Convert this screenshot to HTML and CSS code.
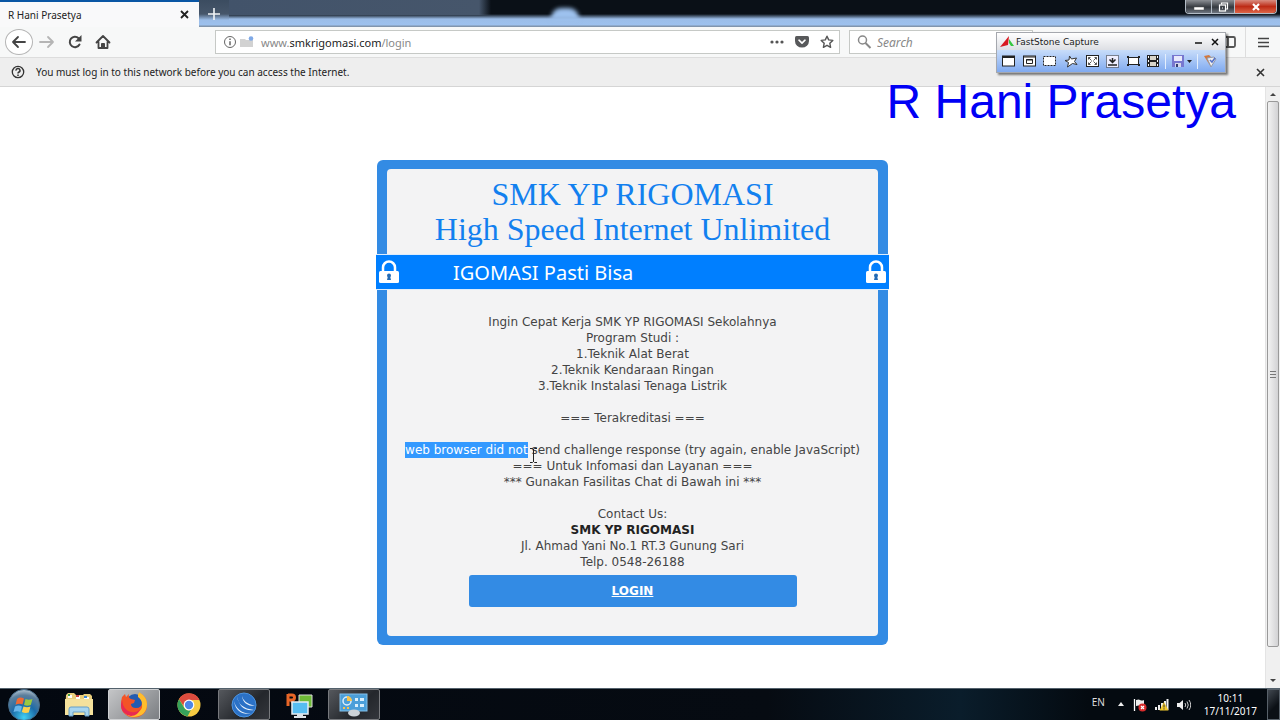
FILE: index.html
```html
<!DOCTYPE html>
<html lang="id">

<head>
    <meta charset="UTF-8">
    <meta name="viewport" content="width=device-width, initial-scale=1.0">
    <title>R Hani Prasetya</title>
    <link rel="stylesheet" href="styles.css">
</head>

<body>
    <!-- Tab strip -->
    <header class="titlebar">
        <div class="tab">
            <span>R Hani Prasetya</span>
            <button class="icon-btn" aria-label="Close tab">
                <svg width="9" height="9" viewBox="0 0 9 9"><path d="M1 1l7 7M8 1l-7 7" stroke="#222" stroke-width="1.8"/></svg>
            </button>
        </div>
        <button class="icon-btn new-tab" aria-label="New tab">
            <svg width="14" height="14" viewBox="0 0 14 14"><path d="M7 1v12M1 7h12" stroke="#f2f5f8" stroke-width="1.6"/></svg>
        </button>
        <div class="glass"><i class="glow"></i></div>
        <div class="window-buttons">
            <button class="win-btn" aria-label="Minimize">
                <svg width="12" height="10" viewBox="0 0 12 10"><path d="M1 5h10v3H1z" fill="#fff" stroke="#555" stroke-width=".5"/></svg>
            </button>
            <button class="win-btn restore" aria-label="Restore">
                <svg width="11" height="10" viewBox="0 0 11 10" fill="none" stroke="#fff" stroke-width="1.2"><path d="M3.5 2.5V1h6v6H8"/><rect x="1.5" y="3" width="6" height="6"/><path d="M4 6h1"/></svg>
            </button>
            <button class="win-btn close" aria-label="Close">
                <svg width="10" height="8" viewBox="0 0 10 8"><path d="M2 1l6 6M8 1L2 7" stroke="#fff" stroke-width="2.2"/></svg>
            </button>
        </div>
    </header>

    <!-- Navigation toolbar -->
    <nav class="toolbar">
        <div class="nav-buttons">
            <button class="icon-btn back" aria-label="Back">
                <svg width="16" height="14" viewBox="0 0 16 14" fill="none" stroke="#444" stroke-width="1.8" stroke-linecap="round" stroke-linejoin="round"><path d="M14 7H2M7 2L2 7l5 5"/></svg>
            </button>
            <button class="icon-btn" aria-label="Forward">
                <svg width="16" height="14" viewBox="0 0 16 14" fill="none" stroke="#b5b5b5" stroke-width="1.8" stroke-linecap="round" stroke-linejoin="round"><path d="M1 7h13M9 2l5 5-5 5"/></svg>
            </button>
            <button class="icon-btn" aria-label="Reload">
                <svg width="16" height="16" viewBox="0 0 16 16"><path d="M12.5 10.5A5.2 5.2 0 1 1 11.6 4.2" fill="none" stroke="#444" stroke-width="2" stroke-linecap="round"/><path d="M14.5 1v6.5H8z" fill="#444"/></svg>
            </button>
            <button class="icon-btn" aria-label="Home">
                <svg width="16" height="16" viewBox="0 0 16 16" fill="none" stroke="#444" stroke-width="1.8" stroke-linecap="round" stroke-linejoin="round"><path d="M1.5 8.5L8 2l6.5 6.5M3.5 8v6h9V8"/><path d="M6.5 14V9.5h3V14" fill="#444" stroke-width="1"/></svg>
            </button>
        </div>
        <div class="urlbar">
            <svg width="14" height="14" viewBox="0 0 14 14" fill="none" stroke="#666"><circle cx="7" cy="7" r="5.5"/><path d="M7 6.2v4M7 3.6v1.4" stroke-width="1.5"/></svg>
            <svg width="14" height="14" viewBox="0 0 14 14"><path d="M0 4h5l1 1h7v7H0z" fill="#d2d2d2"/><circle cx="11" cy="3.5" r="2.3" fill="#7fa9e6"/></svg>
            <a class="url" href="#">www.<b>smkrigomasi.com</b>/login</a>
            <button class="icon-btn" aria-label="Page actions">
                <svg width="14" height="4" viewBox="0 0 14 4" fill="#555"><circle cx="2" cy="2" r="1.6"/><circle cx="7" cy="2" r="1.6"/><circle cx="12" cy="2" r="1.6"/></svg>
            </button>
            <button class="icon-btn" aria-label="Save to Pocket">
                <svg width="14" height="12" viewBox="0 0 14 12"><path d="M1.5 0h11Q14 0 14 1.5V5a7 6.6 0 0 1-14 0V1.5Q0 0 1.5 0z" fill="#58595b"/><path d="M4 4.2l3 2.9 3-2.9" fill="none" stroke="#fff" stroke-width="1.6" stroke-linecap="round" stroke-linejoin="round"/></svg>
            </button>
            <button class="icon-btn" aria-label="Bookmark">
                <svg width="14" height="14" viewBox="0 0 14 14"><path d="M7 1.2l1.7 3.7 4.1.5-3 2.8.8 4.1L7 10.3l-3.6 2 .8-4.1-3-2.8 4.1-.5z" fill="none" stroke="#555" stroke-width="1.4" stroke-linejoin="round"/></svg>
            </button>
        </div>
        <div class="searchbar">
            <svg width="15" height="14" viewBox="0 0 15 14" fill="none" stroke="#888" stroke-width="1.5"><circle cx="5.5" cy="5" r="4"/><path d="M8.5 8l5 5" stroke-width="2"/></svg>
            <input type="text" placeholder="Search" aria-label="Search">
        </div>
        <div class="menu-area">
            <button class="icon-btn" aria-label="Sidebars">
                <svg width="16" height="12" viewBox="0 0 16 12" fill="none" stroke="#555" stroke-width="1.8"><rect x="1" y="1" width="14" height="10" rx="1.5"/><path d="M8 1v10"/></svg>
            </button>
            <button class="icon-btn menu" aria-label="Menu">
                <svg width="11" height="11" viewBox="0 0 11 11" stroke="#444" stroke-width="1.5"><path d="M0 1.5h11M0 5.5h11M0 9.5h11"/></svg>
            </button>
        </div>
    </nav>

    <div class="notice">
        <svg width="14" height="14" viewBox="0 0 14 14" fill="none" stroke="#333"><circle cx="7" cy="7" r="5.7" stroke-width="1.3"/><path d="M5 5.6a2 1.9 0 1 1 2.7 1.6Q7 7.5 7 8.5M7 9.6v1.5" stroke-width="1.5"/></svg>
        <span>You must log in to this network before you can access the Internet.</span>
        <button class="icon-btn" aria-label="Dismiss">
            <svg width="9" height="9" viewBox="0 0 9 9"><path d="M1 1l7 7M8 1l-7 7" stroke="#333" stroke-width="1.6"/></svg>
        </button>
    </div>

    <div class="viewport">
        <main class="page">
            <section class="card">
                <div class="card-body">
                    <h1>SMK YP RIGOMASI<br>High Speed Internet Unlimited</h1>
                    <div class="banner">
                        <svg width="22" height="24" viewBox="0 0 22 24"><path d="M5 12V7.5a6 6 0 0 1 12 0V12" fill="none" stroke="#fff" stroke-width="2.5"/><rect x="1" y="11" width="20" height="12" rx="1.5" fill="#fff"/><circle cx="11" cy="15.5" r="2" fill="#246bb5"/><path d="M10 16h2l1 4H9z" fill="#246bb5"/></svg>
                        <span class="marquee">IGOMASI Pasti Bisa</span>
                        <svg width="22" height="24" viewBox="0 0 22 24"><path d="M5 12V7.5a6 6 0 0 1 12 0V12" fill="none" stroke="#fff" stroke-width="2.5"/><rect x="1" y="11" width="20" height="12" rx="1.5" fill="#fff"/><circle cx="11" cy="15.5" r="2" fill="#246bb5"/><path d="M10 16h2l1 4H9z" fill="#246bb5"/></svg>
                    </div>
                    <div class="info">
                        <p>Ingin Cepat Kerja SMK YP RIGOMASI Sekolahnya<br>
                            Program Studi :<br>
                            1.Teknik Alat Berat<br>
                            2.Teknik Kendaraan Ringan<br>
                            3.Teknik Instalasi Tenaga Listrik</p>
                        <p>=== Terakreditasi ===</p>
                        <p><mark>web browser did not<svg class="ibeam" width="7" height="15" viewBox="0 0 7 15"><path d="M0 .5h2.5l1 1 1-1H7M3.5 1v13M0 14.5h2.5l1-1 1 1H7" fill="none" stroke="#222"/></svg></mark> send challenge response (try again, enable JavaScript)<br>
                            === Untuk Infomasi dan Layanan ===<br>
                            *** Gunakan Fasilitas Chat di Bawah ini ***</p>
                        <p>Contact Us:<br>
                            <strong>SMK YP RIGOMASI</strong><br>
                            Jl. Ahmad Yani No.1 RT.3 Gunung Sari<br>
                            Telp. 0548-26188</p>
                    </div>
                    <a class="login" href="#">LOGIN</a>
                </div>
            </section>
        </main>
        <div class="scrollbar">
            <i class="arrow up"></i>
            <div class="thumb"><i></i></div>
            <i class="arrow down"></i>
        </div>
    </div>

    <!-- Windows taskbar -->
    <footer class="taskbar">
        <button class="task start" aria-label="Start">
            <svg width="34" height="32" viewBox="0 0 34 32">
                <defs><radialGradient id="orb" cx=".5" cy=".9" r=".9"><stop offset="0" stop-color="#3fd0f5"/><stop offset=".45" stop-color="#1c6ba8"/><stop offset=".8" stop-color="#5d7f9c"/><stop offset="1" stop-color="#b5c6d3"/></radialGradient></defs>
                <circle cx="17" cy="16" r="15.5" fill="url(#orb)" stroke="#456b88"/>
                <path d="M10 10q3-2.5 7-.5l-1.5 6q-3-1.5-7 .2z" fill="#ee6a35"/>
                <path d="M18.5 10q3 1.5 7 0l-1.7 6q-3.5 1.5-6.8 0z" fill="#9bc93f"/>
                <path d="M8 17.5q4-2 7 0l-1.7 5.5q-3-1.5-6.8 0z" fill="#69b6ea"/>
                <path d="M16.5 17.5q3.5 1.5 7 0l-1.7 6q-3.5 1.2-7-.5z" fill="#fbd04d"/>
            </svg>
        </button>
        <button class="task" aria-label="Explorer">
            <svg width="30" height="26" viewBox="0 0 30 26"><path d="M2 3l2-2h6l2 2h7l1-1h6l2 2v19H1z" fill="#e9ce7c"/><path d="M4 3h4v3H4zM12 4h4v3h-4zM20 5h5v2h-5z" fill="#fff"/><path d="M4 2h2v2H4z" fill="#3c9b46"/><path d="M12 3h3v2h-3z" fill="#c44"/><path d="M20 4h3v2h-3z" fill="#3b87d6"/><path d="M1 7h28v16H1z" fill="#f4e19c"/><path d="M5 24v-7q0-2 2-2h16q2 0 2 2v7h-4v-4H9v4z" fill="#a7d5ef" stroke="#679fc8"/></svg>
        </button>
        <button class="task open active" aria-label="Firefox">
            <svg width="28" height="26" viewBox="0 0 28 26"><circle cx="15" cy="11" r="9" fill="#235bb0"/><path d="M2 5l3-3 1 3 3-3q-1 4 2 5l4 1-1 3-3 1q0 4 5 4 6 0 6-6 0-4-3-7l-1-1 3 1-1-2q7 4 7 12a13 12 0 0 1-26 1Q1 8 2 5z" fill="#f35426"/><path d="M18 2q2-1 1-2 8 5 8 12 0 12-13 13-6 0-9-4 6 3 12 0 6-3 5-9 0-4-4-7z" fill="#ffbd2d"/><path d="M2 8q1 10 9 12 6 1 9-3-2 7-9 7Q1 22 1 13z" fill="#e92a51"/></svg>
        </button>
        <button class="task" aria-label="Chrome">
            <svg width="26" height="24" viewBox="0 0 26 24"><circle cx="13" cy="12" r="11.5" fill="#f6cb42"/><path d="M3 6.2A11.5 11.5 0 0 1 23.5 7H13a5 5 0 0 0-4.6 7z" fill="#dc4b3e"/><path d="M3 6.2l5.5 9a5 5 0 0 0 6.5 1.6l-3.5 6.6A11.5 11.5 0 0 1 3 6.2z" fill="#36a15a"/><circle cx="13" cy="12" r="5.4" fill="#fff"/><circle cx="13" cy="12" r="4.2" fill="#4d86e6"/></svg>
        </button>
        <button class="task open" aria-label="Network tool">
            <svg width="26" height="26" viewBox="0 0 26 26"><circle cx="13" cy="13" r="12" fill="#2b71c6" stroke="#4c94e0"/><path d="M6 4q1 12 17 14-14 2-17-14zM3 9q3 12 17 13Q5 23 3 9zM11 4q1 7 13 10-12 0-13-10z" fill="#e9f3fc"/></svg>
        </button>
        <button class="task" aria-label="Remote screens">
            <svg width="28" height="28" viewBox="0 0 28 28"><path d="M14 4h13v12H14z" fill="#6ebb36" stroke="#ddd"/><path d="M3 3v12M3 4h4a2.5 2.5 0 0 1 0 5H3M6 9l4 6" fill="none" stroke="#e86627" stroke-width="3"/><rect x="7" y="11" width="16" height="12" fill="#57bdf1" stroke="#e7eef3" stroke-width="1.5"/><path d="M12 23h6v2h3v2H9v-2h3z" fill="#dde3e8"/></svg>
        </button>
        <button class="task open" aria-label="Control panel">
            <svg width="30" height="24" viewBox="0 0 30 24"><rect x="1" y="1" width="27" height="17" fill="#4b9fd9" stroke="#83c0e9"/><circle cx="8" cy="8" r="4" fill="none" stroke="#dceffc" stroke-width="1.5"/><path d="M8 8V3a5 5 0 0 1 5 5z" fill="#f8c24c"/><path d="M16 5h3v3h-3zM21 5h4v3h-4zM16 11h3v3h-3zM21 11h4v3h-4z" fill="#d9effc"/><path d="M4 14h2v2H4zM8 14h2v2H8z" fill="#f8c24c"/><ellipse cx="15" cy="20" rx="6" ry="3.5" fill="#cdd3d8"/></svg>
        </button>
        <div class="tray">
            <span class="lang">EN</span>
            <svg width="8" height="5" viewBox="0 0 8 5"><path d="M4 0l3 4H1z" fill="#eee"/></svg>
            <svg width="14" height="14" viewBox="0 0 14 14"><path d="M1.5 1v12" stroke="#fff" stroke-width="1.3"/><path d="M3 2q3-1 4 0 2 1 4 0v6q-2 1-4 0-1-1-4 0z" fill="#eee"/><circle cx="9.5" cy="9.5" r="4" fill="#d72b2b"/><path d="M8 8l3 3M11 8l-3 3" stroke="#fff" stroke-width="1.2"/></svg>
            <svg width="14" height="13" viewBox="0 0 14 13"><path d="M0 9h2v3H0zM3 7h2v5H3zM6 5h2v7H6zM9 3h2v9H9zM11.5 1h2v11h-2z" fill="#eee"/><path d="M9 4l4.5 8.5h-9z" fill="#f2c92d"/><path d="M9 6.5v3M9 10.3v1.2" stroke="#333"/></svg>
            <svg width="14" height="12" viewBox="0 0 14 12"><path d="M0 4h2.5L6 1v10L2.5 8H0z" fill="#eee"/><path d="M8 4q1.5 2 0 4M10 2.5q2.5 3.5 0 7M12 1q3.5 5 0 10" fill="none" stroke="#ccc"/></svg>
            <div class="clock">10:11<br>17/11/2017</div>
            <i class="show-desktop"></i>
        </div>
    </footer>

    <!-- Floating capture window -->
    <aside class="capture">
        <div class="capture-title">
            <svg width="15" height="12" viewBox="0 0 15 12"><path d="M0 11L9 0l-1 9-4 1z" fill="#d81920"/><path d="M9 3l5 7h-3L9 7z" fill="#35c740"/></svg>
            <span>FastStone Capture</span>
            <button class="icon-btn" aria-label="Minimize capture"><svg width="8" height="8" viewBox="0 0 8 8"><path d="M0 5h7" stroke="#111" stroke-width="1.5"/></svg></button>
            <button class="icon-btn" aria-label="Close capture"><svg width="8" height="8" viewBox="0 0 8 8"><path d="M1 1l6 6M7 1L1 7" stroke="#111" stroke-width="1.5"/></svg></button>
        </div>
        <div class="capture-tools">
            <button class="icon-btn" aria-label="Active window"><svg width="13" height="12" viewBox="0 0 13 12"><rect x=".5" y="1" width="12" height="10" fill="#fff" stroke="#222"/><path d="M1 1h11v2H1z" fill="#222"/></svg></button>
            <button class="icon-btn" aria-label="Window or object"><svg width="13" height="12" viewBox="0 0 13 12" fill="#fff" stroke="#222"><rect x=".5" y="1" width="12" height="10"/><path d="M0 2h13M3.5 4.5h6v4h-6zM3 5h7"/></svg></button>
            <button class="icon-btn" aria-label="Rectangle"><svg width="13" height="12" viewBox="0 0 13 12"><rect x=".5" y="1.5" width="12" height="9" fill="#fff" stroke="#222" stroke-dasharray="2 1"/></svg></button>
            <button class="icon-btn" aria-label="Freehand"><svg width="14" height="13" viewBox="0 0 14 13"><path d="M5.500 1l2 3 5-1-2 3.500 2.500 3-4.500-1-5 3.500 1-4.500-3.500-2 4-.500z" fill="#fff" stroke="#333"/></svg></button>
            <button class="icon-btn" aria-label="Full screen"><svg width="13" height="12" viewBox="0 0 13 12"><rect x=".5" y=".5" width="12" height="11" fill="#fff" stroke="#222"/><path d="M2.5 4.5v-2h2M2.5 2.5l3 3M8.5 2.5h2v2M10.5 2.5l-3 3M2.5 7.5v2h2M2.5 9.5l3-3M8.5 9.5h2v-2M10.5 9.5l-3-3" fill="none" stroke="#555"/></svg></button>
            <button class="icon-btn" aria-label="Scrolling window"><svg width="13" height="13" viewBox="0 0 13 13"><rect x=".5" y=".5" width="12" height="12" fill="#eef" stroke="#222" stroke-dasharray="1 1"/><path d="M6.5 3v4M3.5 4.5l3 3 3-3M2 10h9" fill="none" stroke="#222" stroke-width="1.5"/></svg></button>
            <button class="icon-btn" aria-label="Fixed region"><svg width="13" height="12" viewBox="0 0 13 12"><rect x="1.5" y="2.5" width="10" height="7" fill="#fff" stroke="#222"/><path d="M0 1h2v2H0zM11 1h2v2h-2zM0 9h2v2H0zM11 9h2v2h-2z" fill="#222"/></svg></button>
            <button class="icon-btn" aria-label="Screen recorder"><svg width="12" height="12" viewBox="0 0 12 12"><path d="M0 0h12v12H0z" fill="#222"/><path d="M3 1h6v4H3zM3 7h6v4H3z" fill="#d8d4c9"/><path d="M1 1h1v2H1zM1 5h1v2H1zM1 9h1v2H1zM10 1h1v2h-1zM10 5h1v2h-1zM10 9h1v2h-1z" fill="#fff"/></svg></button>
            <span class="divider"></span>
            <button class="icon-btn save" aria-label="Output">
                <svg width="12" height="12" viewBox="0 0 12 12"><path d="M0 0h12v12H0z" fill="#7777cf"/><path d="M2 1h8v5H2z" fill="#e8e9fb"/><path d="M3 8h6v4H3z" fill="#d2d5ea"/><path d="M4 9h2v3H4z" fill="#333b6f"/></svg>
                <svg width="5" height="3" viewBox="0 0 5 3"><path d="M0 0h5L2.5 3z" fill="#222"/></svg>
            </button>
            <span class="divider"></span>
            <button class="icon-btn" aria-label="Settings"><svg width="13" height="12" viewBox="0 0 13 12"><path d="M0 1l5-1 3 3-1 9z" fill="#d2793f"/><path d="M3 3l7-1 2 2-5 8z" fill="#eee" stroke="#9298a8"/><path d="M6 5l2 2 3-4" fill="none" stroke="#5370c9" stroke-width="1.5"/></svg></button>
        </div>
    </aside>

    <div class="watermark">R Hani Prasetya</div>
</body>

</html>
```
FILE: styles.css
```css
* {
    box-sizing: border-box;
}

body {
    margin: 0;
    min-height: 100vh;
    display: flex;
    flex-direction: column;
    background: #fff;
    color: #222;
    font-family: "Noto Sans", sans-serif;
    font-size: 10px;
    overflow: hidden;
}

svg {
    display: block;
    flex: none;
}

button {
    font: inherit;
    color: inherit;
    cursor: pointer;
}

.icon-btn {
    display: flex;
    align-items: center;
    justify-content: center;
    padding: 0;
    border: 0;
    background: none;
}

/* Tab strip */
.titlebar {
    display: flex;
    height: 27px;
    background: linear-gradient(#0a1017 0, #0a1017 14px, #9bbde8 19px, #9dc1ee 25px, #8195ad 26px);
}

.tab {
    display: flex;
    align-items: center;
    justify-content: space-between;
    width: 199px;
    padding: 0 10px 0 8px;
    background: #f9f9fa;
    border-top: 2px solid #0a56a4;
}

.new-tab {
    width: 30px;
    background: linear-gradient(#3b4c60 0, #46566a 14px, #9bbde8 20px, #9dc1ee 25px, #8195ad 26px);
}

.glass {
    flex: 1;
    background: linear-gradient(90deg, #42536a, #46566b 250px, transparent 262px) 0 0 / 100% 15px no-repeat;
}

.glow {
    display: block;
    width: 28px;
    height: 12px;
    margin: 8px 0 0 322px;
    border-radius: 10px 10px 0 0;
    background: #9dc1ee;
    filter: blur(2px);
}

.window-buttons {
    display: flex;
    height: 14px;
    margin-right: 3px;
    border: 1px solid #b3bcc6;
    border-top: 0;
    border-radius: 0 0 4px 4px;
    overflow: hidden;
}

.win-btn {
    display: flex;
    align-items: center;
    justify-content: center;
    width: 26px;
    padding: 0;
    border: 0;
    border-right: 1px solid #b3bcc6;
    background: linear-gradient(#8c8f94, #34383e 55%, #6f7680);
}

.win-btn.restore {
    width: 23px;
}

.win-btn.close {
    width: 41px;
    border: 0;
    background: linear-gradient(#d98d80, #bd2b16 50%, #dd6547);
}

/* Navigation toolbar */
.toolbar {
    display: flex;
    align-items: center;
    height: 31px;
    background: #f7f8f8;
    border-bottom: 1px solid #ddd;
}

.nav-buttons {
    display: flex;
    align-items: center;
    gap: 12px;
    width: 215px;
    padding-left: 5px;
}

.back {
    width: 28px;
    height: 26px;
    margin-right: -6px;
    border: 1px solid #b5b5b5;
    border-radius: 50%;
    background: #fff;
}

.urlbar,
.searchbar {
    display: flex;
    align-items: center;
    height: 24px;
    background: #fff;
    border: 1px solid #c6c9c6;
}

.urlbar {
    flex: 1;
    gap: 11px;
    padding: 0 5px 0 7px;
}

.urlbar > svg + svg {
    margin-left: -8px;
}

.url {
    flex: 1;
    margin-left: -4px;
    color: #888;
    font-size: 11px;
    text-decoration: none;
}

.url b {
    color: #222;
    font-weight: 400;
}

.searchbar {
    gap: 5px;
    width: 184px;
    margin-left: 9px;
    padding-left: 7px;
}

.searchbar input {
    width: 100%;
    padding: 0;
    border: 0;
    outline: 0;
    background: none;
    font: italic 12px "Noto Sans", sans-serif;
}

.searchbar input::placeholder {
    color: #888;
}

.menu-area {
    display: flex;
    align-items: center;
    justify-content: flex-end;
    gap: 9px;
    width: 247px;
    height: 100%;
}

.menu {
    width: 35px;
    height: 100%;
    border-left: 1px solid #ddd;
}

.notice {
    display: flex;
    align-items: center;
    gap: 11px;
    height: 29px;
    padding: 0 15px 0 11px;
    background: #eee;
    border-bottom: 1px solid #d5d5d5;
}

.notice .icon-btn {
    margin-left: auto;
}

/* Page */
.viewport {
    flex: 1;
    display: flex;
}

.page {
    flex: 1;
    padding-top: 73px;
}

.card {
    max-width: 511px;
    margin: 0 auto;
    padding: 9px 10px;
    background: #338be4;
    border-radius: 6px;
}

.card-body {
    padding-bottom: 29px;
    background: #f3f3f4;
    border-radius: 4px;
    text-align: center;
}

h1 {
    margin: 0;
    padding: 8px 0 7px;
    color: #1280ef;
    font: 32px/35px "Liberation Serif", serif;
}

.banner {
    display: flex;
    align-items: center;
    height: 36px;
    margin: 0 -11px;
    padding: 0 2px;
    background: #007fff;
    border: solid #dcecfc;
    border-width: 1px 0;
}

.marquee {
    flex: 1;
    padding-left: 53px;
    color: #fff;
    font-size: 20px;
    text-align: left;
    white-space: nowrap;
}

.info {
    padding-top: 24px;
    color: #444;
    font-family: "DejaVu Sans", sans-serif;
    font-size: 12px;
    line-height: 16px;
}

.info p {
    margin: 0 0 16px;
    white-space: nowrap;
}

.info p:last-child {
    margin-bottom: 5px;
}

.info strong {
    color: #222;
}

mark {
    position: relative;
    display: inline-block;
    background: #3399ff;
    color: #fff;
}

/* text pointer at the end of the selection */
.ibeam {
    position: absolute;
    right: -9px;
    top: 6px;
}

.login {
    display: block;
    width: 328px;
    margin: 0 auto;
    background: #338be4;
    border-radius: 3px;
    color: #fff;
    font-family: "DejaVu Sans", sans-serif;
    font-size: 12px;
    font-weight: 700;
    line-height: 32px;
}

/* Scrollbar */
.scrollbar {
    display: flex;
    flex-direction: column;
    align-items: center;
    justify-content: space-between;
    width: 15px;
    padding: 6px 0;
    background: #f0f0f0;
    border-left: 1px solid #e4e4e4;
}

.arrow {
    border: 3px solid transparent;
}

.arrow.up {
    border-top: 0;
    border-bottom-color: #444;
}

.arrow.down {
    border-bottom: 0;
    border-top-color: #444;
}

.thumb {
    display: flex;
    align-items: center;
    justify-content: center;
    flex: 1;
    width: 12px;
    margin: 5px 0 32px;
    border: 1px solid #999;
    border-radius: 2px;
    background: linear-gradient(90deg, #f2f2f2, #d2d2d4);
}

.thumb i {
    width: 6px;
    height: 7px;
    background: repeating-linear-gradient(#777 0 1px, transparent 1px 3px);
}

/* Taskbar */
.taskbar {
    display: flex;
    height: 32px;
    background: linear-gradient(90deg, #030810, #060b12 60%, #0a1d2b 75%, #040a10 85%);
    border-top: 1px solid #53616c;
}

.task {
    display: flex;
    align-items: center;
    justify-content: center;
    width: 52px;
    margin-right: 3px;
    padding: 0;
    border: 1px solid transparent;
    border-radius: 2px;
    background: none;
}

.task.start {
    width: 48px;
    margin-right: 5px;
}

.task.open {
    border-color: #77797d;
    background: linear-gradient(135deg, #55585d, #24272c 60%, #33363c);
}

.task.active {
    border-color: #ced0d2;
    background: linear-gradient(135deg, #c4c5c7, #7b7e82);
}

.tray {
    display: flex;
    align-items: center;
    gap: 8px;
    margin-left: auto;
    color: #fff;
}

.lang {
    margin: -6px 4px 0 0;
    color: #ddd;
}

.clock {
    margin: 0 2px 0 5px;
    line-height: 13px;
    text-align: center;
}

.show-desktop {
    width: 13px;
    height: 100%;
    border: 1px solid #58616a;
    background: linear-gradient(135deg, #414850, #0b1016 60%);
}

/* Capture window and watermark float above the browser */
.capture {
    position: absolute;
    top: 32px;
    right: 54px;
    width: 230px;
    height: 41px;
    background: #f0f0f1;
    border: 1px solid #a5a8ae;
    box-shadow: 2px 2px 2px rgba(0, 0, 0, 0.5);
}

.capture-title {
    display: flex;
    align-items: center;
    gap: 8px;
    height: 17px;
    padding: 0 6px 0 3px;
    background: linear-gradient(#fff, #dddfe4);
    font-family: "DejaVu Sans", sans-serif;
    font-size: 9px;
}

.capture-title span {
    flex: 1;
    margin-left: -7px;
}

.capture-tools {
    display: flex;
    align-items: center;
    justify-content: space-between;
    height: 22px;
    padding: 0 8px 0 5px;
    background: linear-gradient(#c8ddfa, #80aaf0);
}

.divider {
    width: 1px;
    height: 15px;
    margin: 0 -2px;
    background: #e4effd;
}

.save {
    gap: 3px;
}

.watermark {
    position: absolute;
    top: 78px;
    right: 44px;
    color: #0000f5;
    font: 48px/48px "Liberation Sans", sans-serif;
    pointer-events: none;
}
```
